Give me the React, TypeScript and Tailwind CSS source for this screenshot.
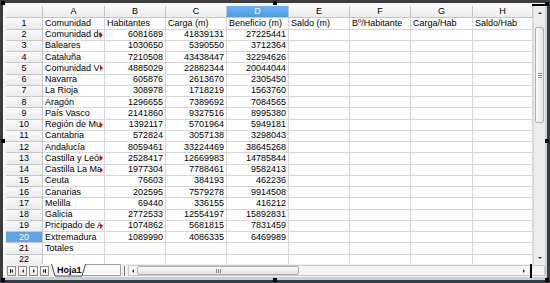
import React from 'react';

const cols = [
  { l: 'A', w: 'w-[62px]' },
  { l: 'B', w: 'w-[61px]' },
  { l: 'C', w: 'w-[61px]' },
  { l: 'D', w: 'w-[62px]' },
  { l: 'E', w: 'w-[61px]' },
  { l: 'F', w: 'w-[61px]' },
  { l: 'G', w: 'w-[62px]' },
  { l: 'H', w: 'w-[60px]' },
];

// [nombre, desborda, habitantes, carga, beneficio]
const rows: [string, boolean, string, string, string][] = [
  ['Comunidad de', true, '6081689', '41839131', '27225441'],
  ['Baleares', false, '1030650', '5390550', '3712364'],
  ['Cataluña', false, '7210508', '43438447', '32294626'],
  ['Comunidad V', true, '4885029', '22882344', '20044044'],
  ['Navarra', false, '605876', '2613670', '2305450'],
  ['La Rioja', false, '308978', '1718219', '1563760'],
  ['Aragón', false, '1296655', '7389692', '7084565'],
  ['País Vasco', false, '2141860', '9327516', '8995380'],
  ['Región de Mu', true, '1392117', '5701964', '5949181'],
  ['Cantabria', false, '572824', '3057138', '3298043'],
  ['Andalucía', false, '8059461', '33224469', '38645268'],
  ['Castilla y León', true, '2528417', '12669983', '14785844'],
  ['Castilla La Ma', true, '1977304', '7788461', '9582413'],
  ['Ceuta', false, '76603', '384193', '462236'],
  ['Canarias', false, '202595', '7579278', '9914508'],
  ['Melilla', false, '69440', '336155', '416212'],
  ['Galicia', false, '2772533', '12554197', '15892831'],
  ['Pricipado de A', true, '1074862', '5681815', '7831459'],
  ['Extremadura', false, '1089990', '4086335', '6469989'],
  ['Totales', false, '', '', ''],
  ['', false, '', '', ''],
];

const headRow = ['Comunidad', 'Habitantes', 'Carga (m)', 'Beneficio (m)', 'Saldo (m)', 'Bº/Habitante', 'Carga/Hab', 'Saldo/Hab'];

function Handle({ pos }: { pos: string }) {
  return <div className={`absolute h-[4px] w-[4px] bg-black ${pos}`} />;
}

function RowHead({ n, selected }: { n: number; selected?: boolean }) {
  return (
    <div
      className={`flex w-[37px] shrink-0 items-center justify-center border-r border-b border-[#c6c6c6] ${
        selected ? 'bg-[#5ea3ea] text-white' : 'bg-gradient-to-b from-[#fafafa] to-[#ececec]'
      }`}
    >
      {n}
    </div>
  );
}

function Cell({ w, text, right, overflow }: { w: string; text: string; right?: boolean; overflow?: boolean }) {
  return (
    <div
      className={`relative flex shrink-0 items-center overflow-hidden whitespace-nowrap border-r border-b border-[#d6d6d6] bg-white ${w} ${
        right ? 'justify-end pr-[2px]' : 'pl-[2px]'
      } ${overflow ? 'pr-[4px]' : ''}`}
    >
      <span className="overflow-hidden">{text}</span>
      {overflow && (
        <span className="absolute right-[1px] top-1/2 h-0 w-0 -translate-y-1/2 border-y-[3px] border-l-[3px] border-y-transparent border-l-[#d01010]" />
      )}
    </div>
  );
}

function Grid() {
  return (
    <div className="min-w-0 flex-1 overflow-hidden bg-white">
      <div className="flex h-[12.3px]">
        <div className="w-[37px] shrink-0 border-r border-b border-[#c6c6c6] bg-gradient-to-b from-[#fafafa] to-[#ececec]" />
        {cols.map((c) => (
          <div
            key={c.l}
            className={`flex shrink-0 items-center justify-center border-r border-b border-[#c6c6c6] ${c.w} ${
              c.l === 'D' ? 'bg-gradient-to-b from-[#6cb2f4] to-[#4f9be6] text-white' : 'bg-gradient-to-b from-[#fafafa] to-[#ececec]'
            }`}
          >
            {c.l}
          </div>
        ))}
      </div>
      <div className="flex h-[11.25px]">
        <RowHead n={1} />
        {headRow.map((t, i) => (
          <Cell key={i} w={cols[i].w} text={t} />
        ))}
      </div>
      {rows.map((r, i) => (
        <div key={i} className="flex h-[11.25px]">
          <RowHead n={i + 2} selected={i + 2 === 20} />
          <Cell w={cols[0].w} text={r[0]} overflow={r[1]} />
          <Cell w={cols[1].w} text={r[2]} right />
          <Cell w={cols[2].w} text={r[3]} right />
          <Cell w={cols[3].w} text={r[4]} right />
          <Cell w={cols[4].w} text="" />
          <Cell w={cols[5].w} text="" />
          <Cell w={cols[6].w} text="" />
          <Cell w={cols[7].w} text="" />
        </div>
      ))}
    </div>
  );
}

function Tri({ dir }: { dir: 'up' | 'down' | 'left' | 'right' }) {
  const cls = {
    up: 'border-x-[2px] border-b-[2px] border-x-transparent border-b-[#333]',
    down: 'border-x-[2px] border-t-[2px] border-x-transparent border-t-[#333]',
    left: 'border-y-[2px] border-r-[2px] border-y-transparent border-r-[#333]',
    right: 'border-y-[2px] border-l-[2px] border-y-transparent border-l-[#333]',
  }[dir];
  return <span className={`block h-0 w-0 ${cls}`} />;
}

function VScroll() {
  return (
    <div className="flex w-[12px] shrink-0 flex-col items-center bg-[#ececec] border-l border-[#dcdcdc]">
      <div className="flex h-[14px] items-center justify-center">
        <Tri dir="up" />
      </div>
      <div className="mt-[7px] flex h-[96px] w-[9px] flex-col items-center justify-center gap-[1px] rounded-[2px] border border-[#b0b0b0] bg-gradient-to-r from-[#fbfbfb] to-[#e3e3e3]">
        <span className="h-px w-[4px] bg-[#8a8a8a]" />
        <span className="h-px w-[4px] bg-[#8a8a8a]" />
        <span className="h-px w-[4px] bg-[#8a8a8a]" />
      </div>
      <div className="flex-1" />
      <div className="flex h-[12px] items-center justify-center">
        <Tri dir="down" />
      </div>
    </div>
  );
}

function NavBtn({ children }: { children: React.ReactNode }) {
  return (
    <div className="flex h-[10px] w-[9px] items-center justify-center border border-[#8e8e8e] bg-gradient-to-b from-white to-[#e4e4e4]">
      {children}
    </div>
  );
}

function TabBar() {
  return (
    <div className="flex h-[13px] items-center bg-[#f0f0f0]">
      <div className="ml-[1px] flex gap-[2px]">
        <NavBtn>
          <span className="h-[4px] w-px bg-[#222]" />
          <Tri dir="left" />
        </NavBtn>
        <NavBtn>
          <Tri dir="left" />
        </NavBtn>
        <NavBtn>
          <Tri dir="right" />
        </NavBtn>
        <NavBtn>
          <Tri dir="right" />
          <span className="h-[4px] w-px bg-[#222]" />
        </NavBtn>
      </div>
      <div className="relative ml-[2px] flex h-full w-[70px] items-start">
        <svg className="absolute inset-0" width="70" height="13" viewBox="0 0 70 13">
          <path d="M34 0.5 L69.5 0.5 L69.5 11.5 L32 11.5" fill="#fafafa" stroke="#a0a0a0" />
          <path d="M0.5 0 L4 12 L31 12 L34.5 0" fill="#ffffff" stroke="#444" />
        </svg>
        <span className="relative ml-[6px] mt-[1px] text-[9px] font-bold leading-[10px]">Hoja1</span>
      </div>
      <div className="ml-[1px] flex h-full w-[5px] items-center justify-center">
        <span className="h-[10px] w-px bg-[#7a7a7a]" />
      </div>
      <div className="ml-[1px] flex h-[11px] flex-1 items-center border border-[#c8c8c8] bg-[#f4f4f4]">
        <div className="flex w-[8px] justify-center">
          <Tri dir="left" />
        </div>
        <div className="flex h-full w-[162px] items-center justify-center gap-[1px] rounded-[2px] border border-[#b0b0b0] bg-gradient-to-b from-[#fbfbfb] to-[#e0e0e0]">
          <span className="h-[4px] w-px bg-[#8a8a8a]" />
          <span className="h-[4px] w-px bg-[#8a8a8a]" />
          <span className="h-[4px] w-px bg-[#8a8a8a]" />
        </div>
        <div className="flex-1" />
        <div className="flex w-[8px] justify-center">
          <Tri dir="right" />
        </div>
        <span className="ml-[2px] h-[15px] w-[2px] bg-black" />
        <div className="w-[12px]" />
      </div>
    </div>
  );
}

export default function App() {
  return (
    <div className="relative h-[283px] w-[550px] bg-[#3c3c3c] p-[3px] font-['Liberation_Sans',Arial,sans-serif] text-[9px] leading-none text-black">
      <div className="flex h-full flex-col border-r-2 border-b-[3px] border-[#bfd1e6] bg-[#f7f7f7] pt-[3px] pl-[3px]">
        <div className="flex h-[258px]">
          <Grid />
          <VScroll />
        </div>
        <TabBar />
      </div>
      <Handle pos="left-[1px] top-[1px]" />
      <Handle pos="left-[273px] top-[1px]" />
      <Handle pos="right-[1px] top-[2px]" />
      <div className="absolute right-[2px] top-[4px] h-[2px] w-[16px] bg-black" />
      <Handle pos="left-[1px] top-[139px]" />
      <Handle pos="right-[1px] top-[139px]" />
      <Handle pos="left-[1px] bottom-[1px]" />
      <Handle pos="left-[273px] bottom-[1px]" />
      <Handle pos="right-[1px] bottom-[1px]" />
    </div>
  );
}
